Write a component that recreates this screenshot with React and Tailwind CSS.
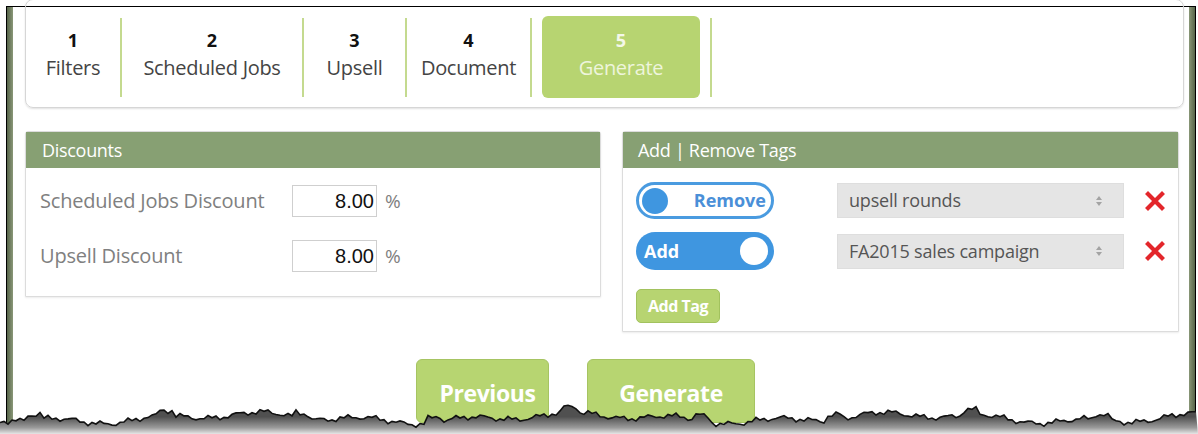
import React from "react";

const tabs = [
  { num: "1", label: "Filters", w: "w-[94px]" },
  { num: "2", label: "Scheduled Jobs", w: "w-[180px]" },
  { num: "3", label: "Upsell", w: "w-[101px]" },
  { num: "4", label: "Document", w: "w-[123px]" },
  { num: "5", label: "Generate", w: "w-[178px]", active: true },
];

const discounts = [
  { label: "Scheduled Jobs Discount", value: "8.00" },
  { label: "Upsell Discount", value: "8.00" },
];

const tagRows = [
  { mode: "remove", tag: "upsell rounds" },
  { mode: "add", tag: "FA2015 sales campaign" },
];

// jagged paper edge along the bottom
const tearPoints = () => {
  const pts = [];
  for (let x = 0; x <= 1198; x += 4) {
    const y =
      24 +
      3.5 * Math.sin(x * 0.019) +
      2.8 * Math.sin(x * 0.061 + 1.3) +
      1.8 * Math.sin(x * 0.23 + 0.4) +
      1.4 * Math.sin(x * 0.71 + 2.1) +
      (Math.sin(x * 0.047) > 0.93 ? -5 : 0);
    pts.push([x, y]);
  }
  return pts;
};

function TornEdge() {
  const pts = tearPoints();
  const line = pts.map(([x, y], i) => `${i ? "L" : "M"}${x} ${y.toFixed(1)}`).join(" ");
  const area = `${line} L1198 40 L0 40 Z`;
  return (
    <svg className="absolute bottom-0 left-0" width="1198" height="40" viewBox="0 0 1198 40">
      <defs>
        <linearGradient id="tearShade" x1="0" y1="0" x2="0" y2="1">
          <stop offset="0.4" stopColor="#505050" />
          <stop offset="0.78" stopColor="#9a9a9a" />
          <stop offset="1" stopColor="#e6e6e6" />
        </linearGradient>
      </defs>
      <path d={area} fill="url(#tearShade)" />
      <path d={line} fill="none" stroke="#111" strokeWidth="1.6" />
    </svg>
  );
}

function SortArrows() {
  return (
    <svg width="8" height="12" viewBox="0 0 8 12">
      <path d="M4 1 L7 5 L1 5 Z" fill="#a3a3a3" />
      <path d="M4 11 L7 7 L1 7 Z" fill="#a3a3a3" />
    </svg>
  );
}

function RedX() {
  return (
    <svg width="20" height="20" viewBox="0 0 20 20">
      <path d="M3 3 L17 17 M17 3 L3 17" stroke="#e3262b" strokeWidth="4.2" strokeLinecap="square" />
    </svg>
  );
}

function Toggle({ mode }) {
  if (mode === "remove") {
    return (
      <div className="flex h-[37px] w-[138px] items-center justify-between rounded-full border-[3px] border-[#4a9be0] bg-white pl-[3px] pr-[5px]">
        <span className="h-[26px] w-[26px] rounded-full bg-[#3f96e0]" />
        <span className="text-[18px] font-bold text-[#4a8fd8]">Remove</span>
      </div>
    );
  }
  return (
    <div className="flex h-[38px] w-[138px] items-center justify-between rounded-full bg-[#3f96e0] pl-[8px] pr-[6px]">
      <span className="text-[18px] font-bold text-white">Add</span>
      <span className="h-[28px] w-[28px] rounded-full bg-white" />
    </div>
  );
}

export default function App() {
  return (
    <div className="relative h-[434px] w-[1198px] overflow-hidden bg-white font-['Open_Sans',sans-serif]">
      <div className="ml-[6px] mt-[6px] flex h-[428px] w-[1190px] border-x border-t border-black">
        <div className="w-[6px] bg-gradient-to-r from-[#56644a] to-[#8a9878]" />

        <div className="flex-1 bg-white pl-[12px] pr-[5px]">
          {/* step tabs */}
          <div className="-mt-[8px] flex h-[109px] items-center rounded-lg border border-[#d6d6d6] pt-[7px] shadow-[0_1px_2px_rgba(0,0,0,0.12)]">
            {tabs.map((t) => (
              <React.Fragment key={t.num}>
                <div className={`${t.w} flex h-[82px] items-center justify-center`}>
                  <div
                    className={
                      t.active
                        ? "mx-[10px] flex h-full flex-1 flex-col items-center justify-center rounded-md bg-[#b7d471] pb-[4px]"
                        : "flex flex-col items-center justify-center pb-[4px]"
                    }
                  >
                    <span className={`text-[18px] font-bold leading-[22px] ${t.active ? "text-[#f4f8ea]" : "text-[#111]"}`}>
                      {t.num}
                    </span>
                    <span
                      className={`mt-[3px] text-[20px] leading-[28px] tracking-[-0.3px] ${
                        t.active ? "text-[#eef5dc]" : "text-[#444]"
                      }`}
                    >
                      {t.label}
                    </span>
                  </div>
                </div>
                <div className="h-[79px] w-[2px] bg-[#c4da8f]" />
              </React.Fragment>
            ))}
          </div>

          {/* panels */}
          <div className="mt-[23px] flex items-start gap-[21px]">
            <div className="w-[576px] rounded-t-[3px] border border-[#dcdcdc] shadow-[0_1px_2px_rgba(0,0,0,0.08)]">
              <div className="flex h-[36px] items-center bg-[#87a073] px-[16px] text-[18px] tracking-[-0.3px] text-white">
                Discounts
              </div>
              <div className="flex flex-col gap-[23px] pb-[24px] pl-[14px] pt-[17px]">
                {discounts.map((d) => (
                  <div key={d.label} className="flex items-center">
                    <span className="w-[252px] text-[20px] tracking-[-0.2px] text-[#808080]">{d.label}</span>
                    <div className="flex h-[32px] w-[85px] items-center justify-end border border-[#cfcfcf] pr-[2px] font-['Liberation_Sans',sans-serif] text-[20px] text-[#111]">
                      {d.value}
                    </div>
                    <span className="ml-[8px] text-[19px] text-[#808080]">%</span>
                  </div>
                ))}
              </div>
            </div>

            <div className="w-[557px] rounded-t-[3px] border border-[#dcdcdc] shadow-[0_1px_2px_rgba(0,0,0,0.08)]">
              <div className="flex h-[36px] items-center bg-[#87a073] px-[15px] text-[18px] tracking-[-0.3px] text-white">
                Add | Remove Tags
              </div>
              <div className="px-[13px] pb-[8px] pt-[14px]">
                <div className="flex flex-col gap-[13px]">
                  {tagRows.map((r) => (
                    <div key={r.tag} className="flex items-center">
                      <Toggle mode={r.mode} />
                      <div className="ml-[63px] flex h-[35px] w-[287px] items-center justify-between border border-[#dedede] bg-[#e5e5e5] pl-[11px] pr-[20px] text-[18px] tracking-[-0.2px] text-[#555]">
                        <span>{r.tag}</span>
                        <SortArrows />
                      </div>
                      <div className="ml-[21px]">
                        <RedX />
                      </div>
                    </div>
                  ))}
                </div>
                <button className="mt-[19px] h-[34px] w-[84px] rounded-[5px] border border-[#a2c25e] bg-[#b7d471] text-[16px] font-bold tracking-[-0.5px] text-white">
                  Add Tag
                </button>
              </div>
            </div>
          </div>

          {/* wizard buttons */}
          <div className="mt-[27px] flex gap-[38px] pl-[391px]">
            <button className="h-[64px] w-[133px] rounded-[6px] border border-[#a6c462] bg-[#b7d571] pl-[10px] pt-[4px] text-[23px] font-bold tracking-[-0.4px] text-white">
              Previous
            </button>
            <button className="h-[64px] w-[168px] rounded-[6px] border border-[#a6c462] bg-[#b7d571] pt-[4px] text-[23px] font-bold tracking-[-0.4px] text-white">
              Generate
            </button>
          </div>
        </div>

        <div className="w-[6px] bg-gradient-to-r from-[#8a9878] to-[#56644a]" />
      </div>

      <TornEdge />
    </div>
  );
}
